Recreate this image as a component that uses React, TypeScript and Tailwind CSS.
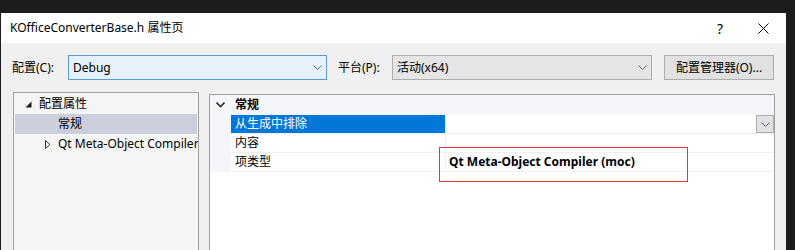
import React from "react";

const font = { fontFamily: '"Noto Sans", "Noto Sans CJK SC", sans-serif' };

const Chevron = ({ className = "" }: { className?: string }) => (
  <svg width="9" height="5" viewBox="0 0 9 5" className={`shrink-0 ${className}`}>
    <polyline points="0.5,0.5 4.5,4.5 8.5,0.5" fill="none" stroke="#606060" strokeWidth="1" />
  </svg>
);

const Combo = ({ value, focused, width }: { value: string; focused?: boolean; width: string }) => (
  <div
    className={`${width} h-[25px] flex items-center justify-between pl-[4px] pr-[4px] border ${
      focused ? "border-[#5b9bd5] bg-[#e5f1fb]" : "border-[#adadad] bg-[#e5e5e5]"
    }`}
  >
    <span className="text-[12px] text-black">{value}</span>
    <Chevron />
  </div>
);

export default function App() {
  return (
    <div className="w-[795px] h-[250px] bg-[#1c1c1c] overflow-hidden pt-[13px] pl-[1px]" style={font}>
      <div className="w-[785px] h-[260px] bg-[#f0f0f0] flex flex-col">
        {/* title bar */}
        <div className="h-[30px] bg-white flex items-center pl-[9px] pr-[17px]">
          <span className="text-[12px] text-black">KOfficeConverterBase.h 属性页</span>
          <span className="ml-auto text-[14px] text-black mr-[35px]">?</span>
          <svg width="11" height="11" viewBox="0 0 11 11" className="shrink-0">
            <path d="M0.5 0.5 L10.5 10.5 M10.5 0.5 L0.5 10.5" stroke="#000" strokeWidth="1" />
          </svg>
        </div>

        {/* config row */}
        <div className="mt-[12px] h-[25px] flex items-center pl-[11px]">
          <span className="w-[56px] text-[12px] text-black">配置(C):</span>
          <Combo value="Debug" focused width="w-[259px]" />
          <span className="ml-[11px] w-[54px] text-[12px] text-black">平台(P):</span>
          <Combo value="活动(x64)" width="w-[260px]" />
          <button className="ml-[12px] w-[110px] h-[25px] border border-[#adadad] bg-[#e1e1e1] text-[12px] text-black">
            配置管理器(O)...
          </button>
        </div>

        {/* panels */}
        <div className="mt-[12px] flex items-start pl-[12px]">
          <div className="w-[186px] h-[170px] border border-[#a0a0a0] bg-[#f5f5f5] p-[1px] overflow-hidden">
            <div className="h-[20px] flex items-center pl-[10px]">
              <svg width="7" height="7" viewBox="0 0 7 7" className="shrink-0">
                <polygon points="6.5,0.5 6.5,6.5 0.5,6.5" fill="#1a1a1a" />
              </svg>
              <span className="ml-[7px] text-[12px] text-black">配置属性</span>
            </div>
            <div className="h-[20px] flex items-center pl-[43px] bg-[#cccedb]">
              <span className="text-[12px] text-black">常规</span>
            </div>
            <div className="h-[20px] flex items-center pl-[30px] whitespace-nowrap">
              <svg width="6" height="9" viewBox="0 0 6 9" className="shrink-0">
                <polygon points="0.5,0.5 5,4.5 0.5,8.5" fill="none" stroke="#333" strokeWidth="1" />
              </svg>
              <span className="ml-[7px] text-[12px] text-black">Qt Meta-Object Compiler (moc)</span>
            </div>
          </div>

          <div className="relative ml-[10px] mt-[2px] w-[566px] h-[170px] border border-[#a0a0a0] bg-white">
            <div className="flex h-[20px] bg-[#f4f6fa] items-center">
              <div className="w-[21px] flex justify-center">
                <svg width="9" height="6" viewBox="0 0 9 6" className="shrink-0">
                  <polyline points="0.5,0.5 4.5,4.5 8.5,0.5" fill="none" stroke="#333" strokeWidth="1.6" />
                </svg>
              </div>
              <span className="ml-[4px] text-[12px] font-bold text-black">常规</span>
            </div>

            <div className="flex">
              <div className="w-[21px] bg-[#f4f6fa]" />
              <div className="flex-1">
                <div className="flex h-[19px] border-b border-[#eef0f5]">
                  <div className="w-[214px] bg-[#0078d7] flex items-center pl-[4px] text-[12px] text-white">
                    从生成中排除
                  </div>
                  <div className="flex-1 border-l border-[#eef0f5] flex justify-end">
                    <div className="w-[18px] h-[18px] border border-[#adadad] bg-[#e1e1e1] flex items-center justify-center">
                      <Chevron />
                    </div>
                  </div>
                </div>
                <div className="flex h-[19px] border-b border-[#eef0f5]">
                  <div className="w-[214px] flex items-center pl-[4px] text-[12px] text-black">内容</div>
                  <div className="flex-1 border-l border-[#eef0f5]" />
                </div>
                <div className="flex h-[19px] border-b border-[#eef0f5]">
                  <div className="w-[214px] flex items-center pl-[4px] text-[12px] text-black">项类型</div>
                  <div className="flex-1 border-l border-[#eef0f5] flex items-center pl-[3px] text-[12px] font-bold text-black">
                    Qt Meta-Object Compiler (moc)
                  </div>
                </div>
              </div>
            </div>

            {/* red annotation box */}
            <div className="absolute left-[229px] top-[52px] w-[249px] h-[35px] border border-[#e8353a]" />
          </div>
        </div>
      </div>
    </div>
  );
}
